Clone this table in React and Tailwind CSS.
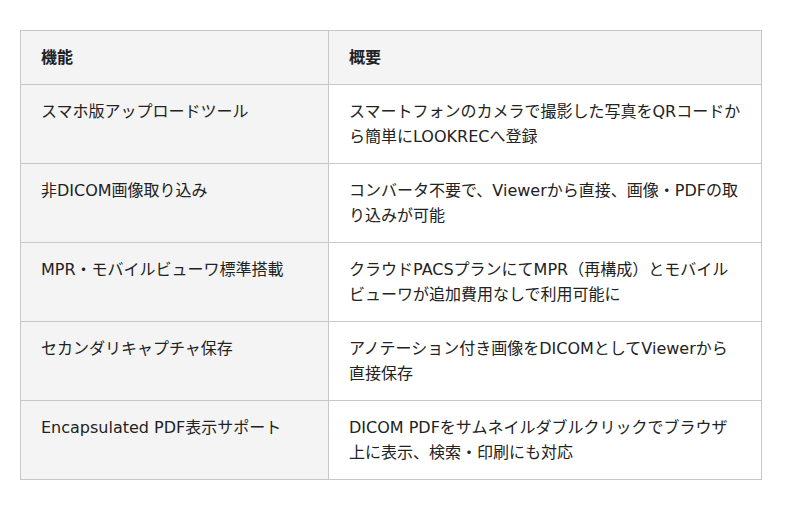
const rows = [
  ['スマホ版アップロードツール', 'スマートフォンのカメラで撮影した写真をQRコードから簡単にLOOKRECへ登録'],
  ['非DICOM画像取り込み', 'コンバータ不要で、Viewerから直接、画像・PDFの取り込みが可能'],
  ['MPR・モバイルビューワ標準搭載', 'クラウドPACSプランにてMPR（再構成）とモバイルビューワが追加費用なしで利用可能に'],
  ['セカンダリキャプチャ保存', 'アノテーション付き画像をDICOMとしてViewerから直接保存'],
  ['Encapsulated PDF表示サポート', 'DICOM PDFをサムネイルダブルクリックでブラウザ上に表示、検索・印刷にも対応'],
]

export default function App() {
  return (
    <div className="w-[800px] h-[510px] bg-white px-5 pt-[30px] font-['DejaVu_Sans','Noto_Sans_CJK_JP',sans-serif] text-[16px] leading-[25px] text-[#222]">
      <table className="w-[742px] border-collapse table-fixed border border-[#d6d6d6]">
        <colgroup>
          <col className="w-[308px]" />
          <col />
        </colgroup>
        <thead>
          <tr className="bg-[#f4f4f4]">
            <th className="text-left font-bold px-5 py-[14px] border border-[#c8c8c8]">機能</th>
            <th className="text-left font-bold px-5 py-[14px] border border-[#c8c8c8]">概要</th>
          </tr>
        </thead>
        <tbody>
          {rows.map(([name, desc]) => (
            <tr key={name}>
              <td className="align-top bg-[#f4f4f4] px-5 py-[14px] h-[79px] border border-[#c8c8c8]">{name}</td>
              <td className="align-top bg-white px-5 py-[14px] h-[79px] border border-[#c8c8c8]">{desc}</td>
            </tr>
          ))}
        </tbody>
      </table>
    </div>
  )
}
